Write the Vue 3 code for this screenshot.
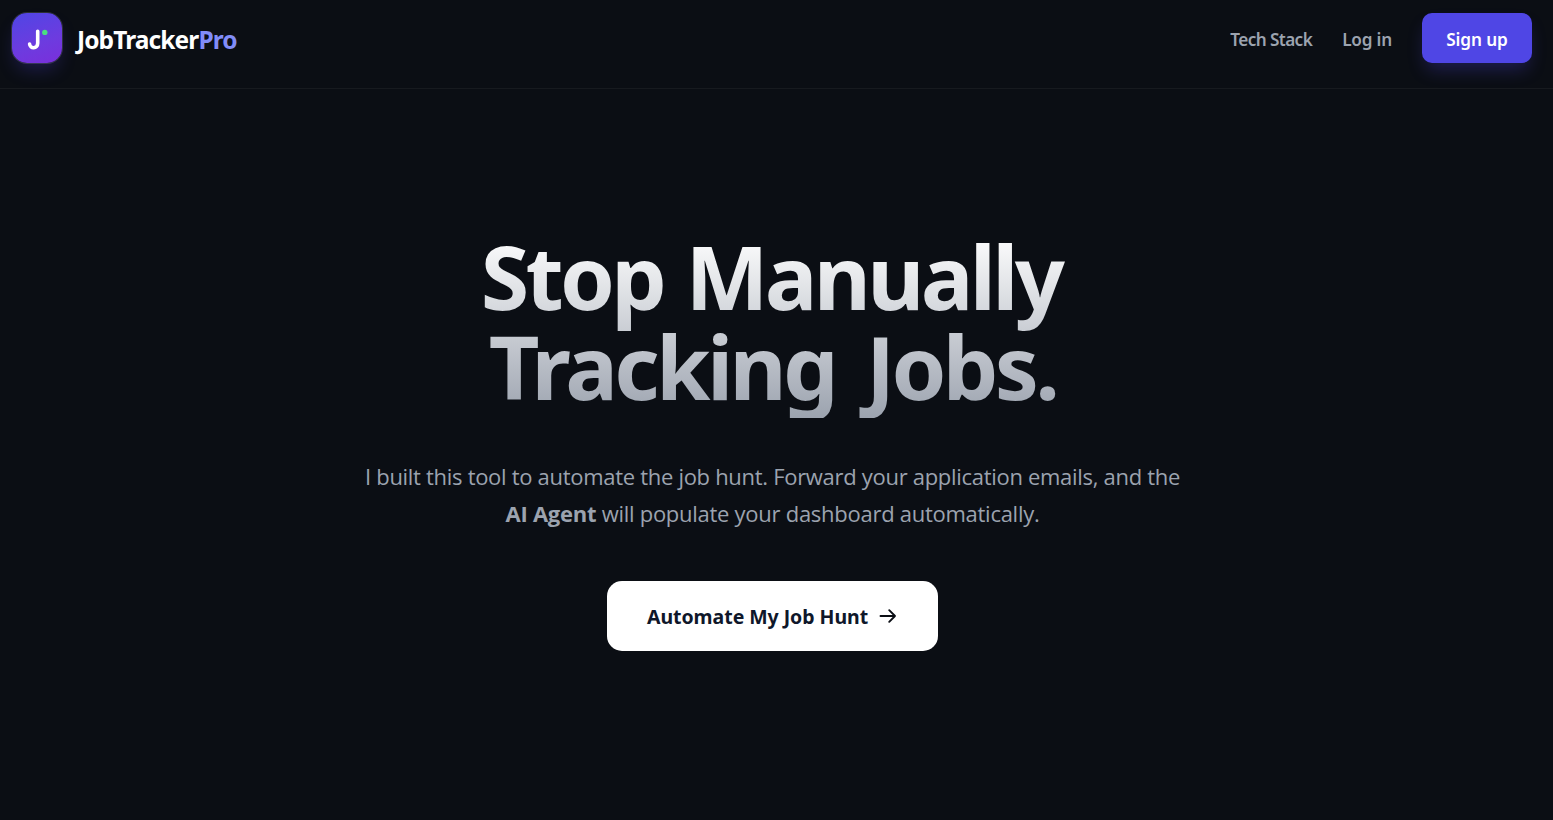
<template>
    <div class="page">
        <header class="navbar">
            <a class="brand" href="#">
                <span class="logo">
                    <svg width="50" height="50" viewBox="0 0 50 50" fill="none">
                        <path d="M25.7 18.3V30.2C25.7 36 17.9 36.2 17.6 31" stroke="#fff" stroke-width="3.6" stroke-linecap="round" />
                        <circle cx="32.8" cy="19.4" r="2.7" fill="#4ade80" />
                    </svg>
                </span>
                <span class="brand-name">JobTracker<span class="accent">Pro</span></span>
            </a>
            <nav class="nav-links">
                <a v-for="link in links" :key="link.name" :class="link.class" href="#">{{link.name}}</a>
                <button class="signup">Sign up</button>
            </nav>
        </header>

        <main class="hero">
            <h1 class="title">
                <span class="line first">Stop Manually</span>
                <span class="line second">Tracking Jobs.</span>
            </h1>
            <p class="subtitle">
                <span class="line sub-first">I built this tool to automate the job hunt. Forward your application emails, and the</span>
                <span class="line sub-second"><strong>AI Agent</strong> will populate your dashboard automatically.</span>
            </p>
            <button class="cta">
                <span class="cta-text">Automate My Job Hunt</span>
                <svg class="arrow" width="18" height="16" viewBox="0 0 18 16" fill="none" stroke="#0b0e14" stroke-width="1.9" stroke-linecap="round" stroke-linejoin="round">
                    <path d="M1.5 8H16M10.2 2.2L16 8L10.2 13.8" />
                </svg>
            </button>
        </main>
    </div>
</template>

<script setup>
const links = [
    { name: 'Tech Stack', class: 'link tech' },
    { name: 'Log in', class: 'link login' },
]
</script>

<style>
body {
    margin: 0;
    background: #0b0e14;
}
</style>

<style scoped>
.page {
    min-height: 820px;
    box-sizing: border-box;
    overflow: hidden;
    background: #0b0e14;
    font-family: "Noto Sans", "Open Sans", sans-serif;
    color: #fff;
}
.navbar {
    display: flex;
    justify-content: space-between;
    align-items: flex-start;
    height: 89px;
    padding: 13px 21px 0 12px;
    box-sizing: border-box;
    border-bottom: 1px solid #171a1f;
}
a {
    color: inherit;
    text-decoration: none;
}
button {
    border: 0;
    font-family: inherit;
    cursor: pointer;
    white-space: nowrap;
}
.brand {
    display: flex;
    align-items: center;
    gap: 15px;
}
.logo {
    width: 50px;
    height: 50px;
    border-radius: 15px;
    background: linear-gradient(160deg, #4f46e5, #6d3bdf 60%, #7a2fdb);
    box-shadow: 0 0 0 1px rgba(255, 255, 255, 0.14), 0 10px 18px -4px rgba(79, 70, 229, 0.28);
}
.logo svg {
    display: block;
}
.brand-name {
    padding-top: 3px;
    font-size: 24.5px;
    line-height: 34px;
    font-weight: 700;
    letter-spacing: -0.9px;
    white-space: nowrap;
}
.accent {
    color: #818cf8;
}
.nav-links {
    display: flex;
    align-items: center;
    gap: 30px;
}
.link {
    padding-top: 3px;
    font-size: 17.2px;
    line-height: 24px;
    font-weight: 600;
    color: #9ca3af;
    white-space: nowrap;
}
.tech {
    letter-spacing: -0.6px;
}
.login {
    letter-spacing: -0.2px;
}
.signup {
    width: 110px;
    height: 50px;
    padding: 3px 0 0;
    border-radius: 10px;
    background: #4f46e5;
    color: #fff;
    font-size: 17.2px;
    font-weight: 600;
    letter-spacing: -0.1px;
    box-shadow: 0 10px 18px -4px rgba(79, 70, 229, 0.3);
}
.hero {
    display: flex;
    flex-direction: column;
    align-items: center;
    padding: 142px 8px 0 0;
}
.line {
    display: block;
    white-space: nowrap;
}
.title {
    margin: 0;
    padding: 0 4px 7px;
    font-size: 88px;
    line-height: 90px;
    font-weight: 700;
    text-align: center;
    color: transparent;
    background: linear-gradient(to bottom, #fff, #9ca3af);
    -webkit-background-clip: text;
    background-clip: text;
}
.first {
    padding-right: 3px;
    letter-spacing: -3.7px;
    word-spacing: 3px;
}
.second {
    letter-spacing: -3.7px;
    word-spacing: 12px;
}
.subtitle {
    margin: 40px 0 0;
    font-family: "Open Sans", "Noto Sans", sans-serif;
    font-size: 22px;
    line-height: 37px;
    text-align: center;
    color: #9ca3af;
}
.sub-first {
    letter-spacing: -0.3px;
}
.sub-second {
    letter-spacing: -0.27px;
}
.cta {
    display: flex;
    align-items: center;
    width: 331px;
    height: 70px;
    margin-top: 49px;
    padding: 0 0 0 40px;
    border-radius: 15px;
    background: #fff;
    color: #0f172a;
}
.cta-text {
    width: 221px;
    font-size: 19.5px;
    font-weight: 700;
    letter-spacing: -0.05px;
    text-align: left;
}
.arrow {
    margin-left: 11px;
}
</style>
